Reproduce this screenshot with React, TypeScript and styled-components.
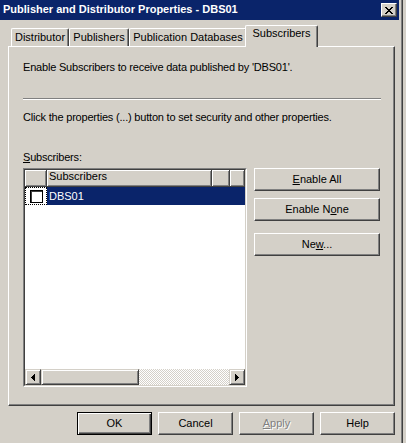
import React from "react";
import styled, { createGlobalStyle, css } from "styled-components";

const FACE = "#d4d0c8";
const SHADOW = "#808080";
const DARK = "#404040";
const HI = "#ffffff";
const NAVY = "#0a246a";

const GlobalStyle = createGlobalStyle`
  html, body { margin: 0; padding: 0; background: ${FACE}; }
  body {
    font-family: "Liberation Sans", Arial, sans-serif;
    font-size: 11px;
    line-height: 13px;
    color: #000;
  }
  #root { width: 406px; height: 443px; overflow: hidden; }
`;

const Frame = styled.div`
  width: 403px;
  height: 443px;
  box-sizing: border-box;
  border-right: 1px solid ${DARK};
`;

const FrameInner = styled.div`
  height: 100%;
  box-sizing: border-box;
  border-right: 1px solid ${SHADOW};
  display: flex;
  flex-direction: column;
`;

const TitleBar = styled.div`
  height: 20px;
  margin-right: 2px;
  box-sizing: border-box;
  background: ${NAVY};
  color: #fff;
  display: flex;
  align-items: flex-start;
  justify-content: space-between;
  padding: 3px 2px 0 3px;
  font-weight: bold;
  font-size: 11px;
  line-height: 13px;
`;

const CloseButton = styled.div`
  width: 16px;
  height: 14px;
  box-sizing: border-box;
  background: ${FACE};
  border: 1px solid;
  border-color: ${HI} ${DARK} ${DARK} ${HI};
  box-shadow: inset -1px -1px ${SHADOW};
  display: flex;
  align-items: center;
  justify-content: center;
`;

const Body = styled.div`
  flex: 1;
  display: flex;
  flex-direction: column;
  padding: 5px 6px 0 8px;
`;

const TabRow = styled.div`
  display: flex;
  align-items: flex-end;
  height: 21px;
  padding-left: 3px;
  position: relative;
  z-index: 1;
`;

const Tab = styled.div<{ $w: number; $active?: boolean }>`
  width: ${(p) => p.$w}px;
  box-sizing: border-box;
  background: ${FACE};
  border-left: 1px solid ${HI};
  border-top: 1px solid ${HI};
  border-right: 1px solid ${DARK};
  border-radius: 2px 2px 0 0;
  box-shadow: inset -1px 0 ${SHADOW};
  text-align: center;
  white-space: nowrap;
  ${(p) =>
    p.$active
      ? css`
          height: 22px;
          margin: 0 -2px -1px -2px;
          padding-top: 1px;
          position: relative;
        `
      : css`
          height: 18px;
          padding-top: 2px;
        `}
`;

const Panel = styled.div`
  width: 387px;
  height: 360px;
  box-sizing: border-box;
  border-top: 1px solid ${HI};
  border-left: 1px solid ${HI};
  border-right: 1px solid ${DARK};
  border-bottom: 1px solid ${DARK};
  box-shadow: inset -1px -1px ${SHADOW};
  padding: 14px 0 0 14px;
  display: flex;
  flex-direction: column;
`;

const Text = styled.div<{ $mt: number }>`
  margin-top: ${(p) => p.$mt}px;
  white-space: nowrap;
  letter-spacing: -0.2px;
`;

const Separator = styled.div`
  margin-top: 24px;
  width: 358px;
  border-top: 1px solid ${SHADOW};
  border-bottom: 1px solid ${HI};
`;

const ContentRow = styled.div`
  margin-top: 4px;
  display: flex;
  gap: 7px;
  align-items: flex-start;
`;

const ListOuter = styled.div`
  width: 224px;
  height: 219px;
  box-sizing: border-box;
  border: 1px solid;
  border-color: ${SHADOW} ${HI} ${HI} ${SHADOW};
`;

const ListInner = styled.div`
  height: 100%;
  box-sizing: border-box;
  border: 1px solid;
  border-color: ${DARK} ${FACE} ${FACE} ${DARK};
  background: #fff;
  display: flex;
  flex-direction: column;
`;

const HeaderRow = styled.div`
  display: flex;
  height: 17px;
`;

const HeaderCell = styled.div<{ $w: number }>`
  width: ${(p) => p.$w}px;
  box-sizing: border-box;
  background: ${FACE};
  border-right: 1px solid ${DARK};
  border-bottom: 1px solid ${DARK};
  box-shadow: inset 1px 1px ${HI}, inset -1px -1px ${SHADOW};
  padding-left: 2px;
  white-space: nowrap;
  overflow: hidden;
`;

const DataRow = styled.div`
  display: flex;
  height: 18px;
`;

const CheckCell = styled.div`
  width: 22px;
  box-sizing: border-box;
  border: 1px dotted #000;
  background: #fff;
  display: flex;
  align-items: center;
  padding-left: 4px;
`;

const CheckBox = styled.div`
  width: 13px;
  height: 13px;
  box-sizing: border-box;
  border: 1px solid #000;
  box-shadow: inset 1px 1px #404040;
  background: #fff;
`;

const NameCell = styled.div`
  flex: 1;
  background: ${NAVY};
  color: #fff;
  line-height: 18px;
  padding-left: 2px;
`;

const ListSpacer = styled.div`
  flex: 1;
`;

const ScrollBar = styled.div`
  display: flex;
  height: 16px;
`;

const raised = css`
  box-sizing: border-box;
  background: ${FACE};
  border: 1px solid;
  border-color: ${FACE} ${DARK} ${DARK} ${FACE};
  box-shadow: inset 1px 1px ${HI}, inset -1px -1px ${SHADOW};
`;

const ScrollArrow = styled.div`
  ${raised};
  width: 16px;
  height: 16px;
  display: flex;
  align-items: center;
  justify-content: center;
`;

const ScrollThumb = styled.div`
  ${raised};
  width: 98px;
  height: 16px;
`;

const ScrollTrack = styled.div`
  flex: 1;
  background: repeating-conic-gradient(${HI} 0 25%, ${FACE} 0 50%) 0 0 / 2px 2px;
`;

const ButtonColumn = styled.div`
  width: 126px;
  display: flex;
  flex-direction: column;
`;

const Button = styled.button<{ $mt?: number; $w?: number; $default?: boolean }>`
  width: ${(p) => p.$w ?? 75}px;
  height: 23px;
  margin: ${(p) => p.$mt ?? 0}px 0 0 0;
  padding: 0 0 1px 0;
  box-sizing: border-box;
  font-family: "Liberation Sans", Arial, sans-serif;
  font-size: 11px;
  line-height: 13px;
  color: #000;
  background: ${FACE};
  border: 1px solid;
  border-color: ${HI} ${DARK} ${DARK} ${HI};
  box-shadow: inset -1px -1px ${SHADOW};
  ${(p) =>
    p.$default &&
    css`
      border-color: #000;
      box-shadow: inset 1px 1px ${HI}, inset -1px -1px ${DARK}, inset -2px -2px ${SHADOW};
    `}
  &:disabled {
    color: ${SHADOW};
    text-shadow: 1px 1px ${HI};
  }
`;

const ButtonRow = styled.div`
  margin-top: 6px;
  display: flex;
  justify-content: flex-end;
  gap: 6px;
`;

const CloseGlyph = () => (
  <svg width="8" height="7" viewBox="0 0 8 7" shapeRendering="crispEdges">
    <path
      fill="#000"
      d="M0 0h2v1H0zM6 0h2v1H6zM1 1h2v1H1zM5 1h2v1H5zM2 2h4v1H2zM3 3h2v1H3zM2 4h4v1H2zM1 5h2v1H1zM5 5h2v1H5zM0 6h2v1H0zM6 6h2v1H6z"
    />
  </svg>
);

const Arrow = ({ dir }: { dir: "left" | "right" }) => (
  <svg width="4" height="7" viewBox="0 0 4 7" shapeRendering="crispEdges">
    {dir === "left" ? (
      <path fill="#000" d="M3 0h1v7H3zM2 1h1v5H2zM1 2h1v3H1zM0 3h1v1H0z" />
    ) : (
      <path fill="#000" d="M0 0h1v7H0zM1 1h1v5H1zM2 2h1v3H2zM3 3h1v1H3z" />
    )}
  </svg>
);

export default function App() {
  return (
    <>
      <GlobalStyle />
      <Frame>
        <FrameInner>
          <TitleBar>
            <span>Publisher and Distributor Properties - DBS01</span>
            <CloseButton>
              <CloseGlyph />
            </CloseButton>
          </TitleBar>
          <Body>
            <TabRow>
              <Tab $w={58}>Distributor</Tab>
              <Tab $w={60}>Publishers</Tab>
              <Tab $w={118}>Publication Databases</Tab>
              <Tab $w={73} $active>
                Subscribers
              </Tab>
            </TabRow>
            <Panel>
              <Text $mt={0}>Enable Subscribers to receive data published by 'DBS01'.</Text>
              <Separator />
              <Text $mt={11}>Click the properties (...) button to set security and other properties.</Text>
              <Text $mt={27}>
                <u>S</u>ubscribers:
              </Text>
              <ContentRow>
                <ListOuter>
                  <ListInner>
                    <HeaderRow>
                      <HeaderCell $w={22} />
                      <HeaderCell $w={165}>Subscribers</HeaderCell>
                      <HeaderCell $w={18} />
                      <HeaderCell $w={15} />
                    </HeaderRow>
                    <DataRow>
                      <CheckCell>
                        <CheckBox />
                      </CheckCell>
                      <NameCell>DBS01</NameCell>
                    </DataRow>
                    <ListSpacer />
                    <ScrollBar>
                      <ScrollArrow>
                        <Arrow dir="left" />
                      </ScrollArrow>
                      <ScrollThumb />
                      <ScrollTrack />
                      <ScrollArrow>
                        <Arrow dir="right" />
                      </ScrollArrow>
                    </ScrollBar>
                  </ListInner>
                </ListOuter>
                <ButtonColumn>
                  <Button $w={126}>
                    <u>E</u>nable All
                  </Button>
                  <Button $w={126} $mt={7}>
                    Enable N<u>o</u>ne
                  </Button>
                  <Button $w={126} $mt={12}>
                    Ne<u>w</u>...
                  </Button>
                </ButtonColumn>
              </ContentRow>
            </Panel>
            <ButtonRow>
              <Button $default>OK</Button>
              <Button>Cancel</Button>
              <Button disabled>
                <u>A</u>pply
              </Button>
              <Button>Help</Button>
            </ButtonRow>
          </Body>
        </FrameInner>
      </Frame>
    </>
  );
}
